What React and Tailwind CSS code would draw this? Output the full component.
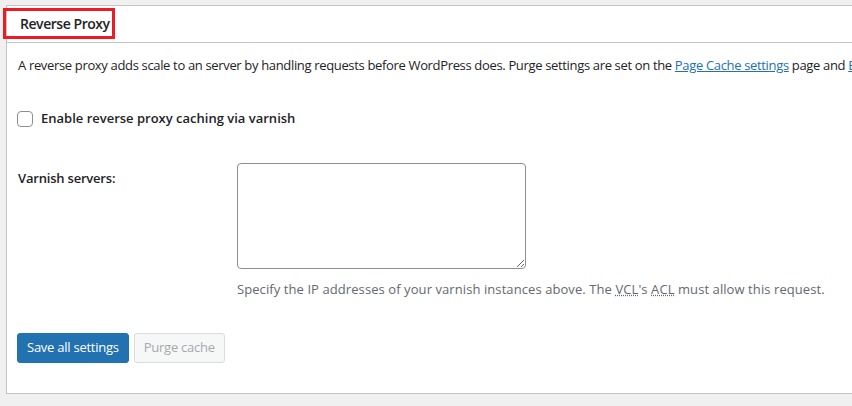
import React from "react";

const font = { fontFamily: '"Open Sans", "Noto Sans", sans-serif' };

export default function App() {
  return (
    <div className="w-[852px] h-[406px] overflow-hidden bg-[#f0f0f1] text-[#1d2327] text-[13px]" style={font}>
      <div className="relative mt-[5px] ml-[6px] w-[900px] h-[389px] bg-white border border-[#c3c4c7]">
        {/* header */}
        <div className="h-[37px] border-b border-[#c3c4c7] flex items-center pl-[13px]">
          <h2 className="text-[14px] font-semibold leading-5 tracking-[-0.45px]">Reverse Proxy</h2>
        </div>
        <div className="absolute left-[-4px] top-[2px] w-[112px] h-[31px] border-[3px] border-[#ed1c24]" />

        <div className="px-[11px]">
          <p className="mt-[12px] leading-5 whitespace-nowrap tracking-[-0.34px]">
            A reverse proxy adds scale to an server by handling requests before WordPress does. Purge settings are set on the{" "}
            <a href="#" className="text-[#2271b1] underline">Page Cache settings</a> page and{" "}
            <a href="#" className="text-[#2271b1] underline">B</a>
          </p>

          <label className="mt-[34px] -ml-px flex items-center h-5 gap-[8px]">
            <span className="w-4 h-4 rounded-[4px] border border-[#8c8f94] bg-white" />
            <span className="font-semibold">Enable reverse proxy caching via varnish</span>
          </label>

          <div className="mt-[34px] flex">
            <div className="w-[219px] shrink-0 pt-[5px] leading-5 font-semibold tracking-[-0.2px]">Varnish servers:</div>
            <div className="flex flex-col">
              <textarea className="w-[289px] h-[106px] rounded-[4px] border border-[#8c8f94] bg-white outline-none" />
              <p className="mt-[10px] leading-5 text-[#646970] tracking-[0.08px] whitespace-nowrap">
                Specify the IP addresses of your varnish instances above. The{" "}
                <abbr className="underline decoration-dotted">VCL</abbr>'s{" "}
                <abbr className="underline decoration-dotted">ACL</abbr> must allow this request.
              </p>
            </div>
          </div>

          <div className="mt-[34px] -ml-px flex gap-[5px]">
            <button className="h-[30px] px-[9px] rounded-[3px] bg-[#2271b1] border border-[#2271b1] text-white tracking-[-0.25px]">
              Save all settings
            </button>
            <button disabled className="h-[30px] px-[9px] rounded-[3px] bg-[#f6f7f7] border border-[#dcdcde] text-[#a7aaad] tracking-[-0.25px]">
              Purge cache
            </button>
          </div>
        </div>
      </div>
    </div>
  );
}
